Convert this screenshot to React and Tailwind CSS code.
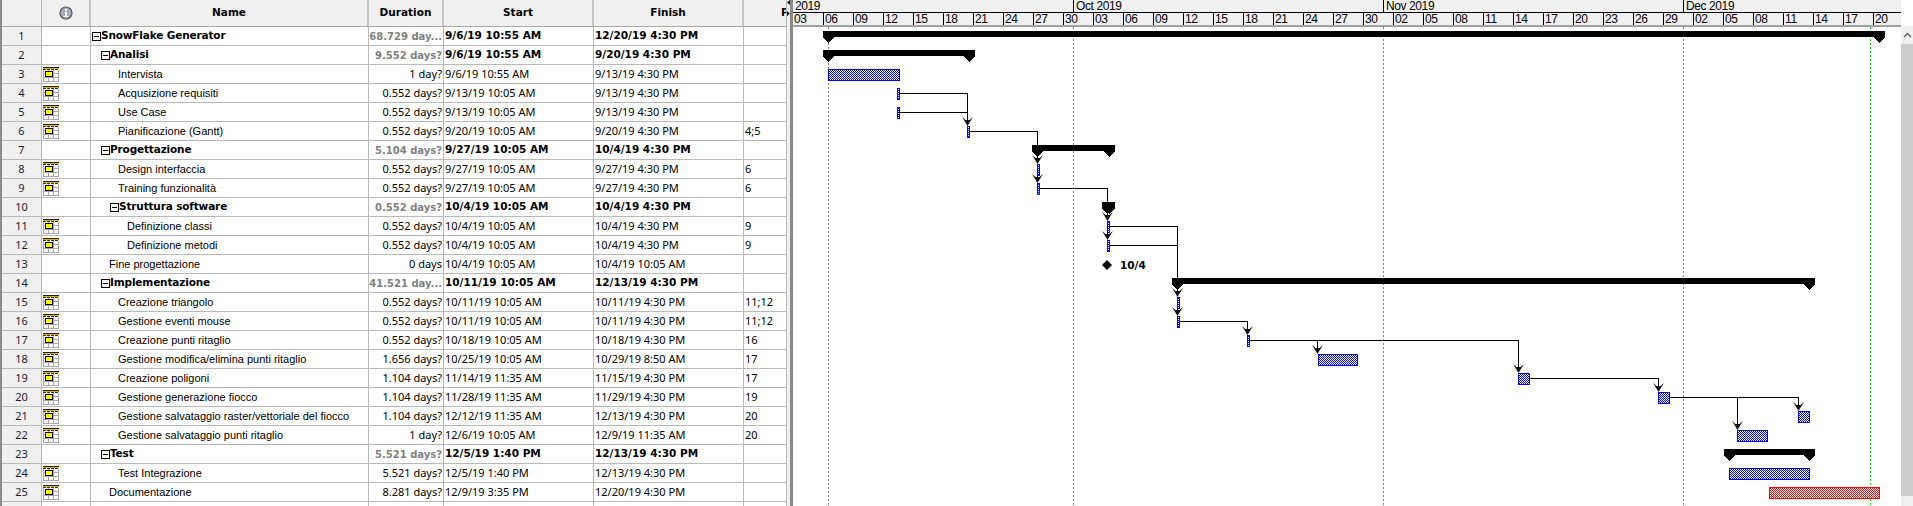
import React from "react";

const rows = [
    { name: "SnowFlake Generator", indent: 1, summary: true, dur: "68.729 day...", start: "9/6/19 10:55 AM", finish: "12/20/19 4:30 PM" },
    { name: "Analisi", indent: 10, summary: true, dur: "9.552 days?", start: "9/6/19 10:55 AM", finish: "9/20/19 4:30 PM" },
    { name: "Intervista", indent: 27, icon: true, dur: "1 day?", start: "9/6/19 10:55 AM", finish: "9/13/19 4:30 PM" },
    { name: "Acqusizione requisiti", indent: 27, icon: true, dur: "0.552 days?", start: "9/13/19 10:05 AM", finish: "9/13/19 4:30 PM" },
    { name: "Use Case", indent: 27, icon: true, dur: "0.552 days?", start: "9/13/19 10:05 AM", finish: "9/13/19 4:30 PM" },
    { name: "Pianificazione (Gantt)", indent: 27, icon: true, dur: "0.552 days?", start: "9/20/19 10:05 AM", finish: "9/20/19 4:30 PM", pred: "4;5" },
    { name: "Progettazione", indent: 10, summary: true, dur: "5.104 days?", start: "9/27/19 10:05 AM", finish: "10/4/19 4:30 PM" },
    { name: "Design interfaccia", indent: 27, icon: true, dur: "0.552 days?", start: "9/27/19 10:05 AM", finish: "9/27/19 4:30 PM", pred: "6" },
    { name: "Training funzionalità", indent: 27, icon: true, dur: "0.552 days?", start: "9/27/19 10:05 AM", finish: "9/27/19 4:30 PM", pred: "6" },
    { name: "Struttura software", indent: 19, summary: true, dur: "0.552 days?", start: "10/4/19 10:05 AM", finish: "10/4/19 4:30 PM" },
    { name: "Definizione classi", indent: 36, icon: true, dur: "0.552 days?", start: "10/4/19 10:05 AM", finish: "10/4/19 4:30 PM", pred: "9" },
    { name: "Definizione metodi", indent: 36, icon: true, dur: "0.552 days?", start: "10/4/19 10:05 AM", finish: "10/4/19 4:30 PM", pred: "9" },
    { name: "Fine progettazione", indent: 18, dur: "0 days", start: "10/4/19 10:05 AM", finish: "10/4/19 10:05 AM" },
    { name: "Implementazione", indent: 10, summary: true, dur: "41.521 day...", start: "10/11/19 10:05 AM", finish: "12/13/19 4:30 PM" },
    { name: "Creazione triangolo", indent: 27, icon: true, dur: "0.552 days?", start: "10/11/19 10:05 AM", finish: "10/11/19 4:30 PM", pred: "11;12" },
    { name: "Gestione eventi mouse", indent: 27, icon: true, dur: "0.552 days?", start: "10/11/19 10:05 AM", finish: "10/11/19 4:30 PM", pred: "11;12" },
    { name: "Creazione punti ritaglio", indent: 27, icon: true, dur: "0.552 days?", start: "10/18/19 10:05 AM", finish: "10/18/19 4:30 PM", pred: "16" },
    { name: "Gestione modifica/elimina punti ritaglio", indent: 27, icon: true, dur: "1.656 days?", start: "10/25/19 10:05 AM", finish: "10/29/19 8:50 AM", pred: "17" },
    { name: "Creazione poligoni", indent: 27, icon: true, dur: "1.104 days?", start: "11/14/19 11:35 AM", finish: "11/15/19 4:30 PM", pred: "17" },
    { name: "Gestione generazione fiocco", indent: 27, icon: true, dur: "1.104 days?", start: "11/28/19 11:35 AM", finish: "11/29/19 4:30 PM", pred: "19" },
    { name: "Gestione salvataggio raster/vettoriale del fiocco", indent: 27, icon: true, dur: "1.104 days?", start: "12/12/19 11:35 AM", finish: "12/13/19 4:30 PM", pred: "20" },
    { name: "Gestione salvataggio punti ritaglio", indent: 27, icon: true, dur: "1 day?", start: "12/6/19 10:05 AM", finish: "12/9/19 11:35 AM", pred: "20" },
    { name: "Test", indent: 10, summary: true, dur: "5.521 days?", start: "12/5/19 1:40 PM", finish: "12/13/19 4:30 PM" },
    { name: "Test Integrazione", indent: 27, icon: true, dur: "5.521 days?", start: "12/5/19 1:40 PM", finish: "12/13/19 4:30 PM" },
    { name: "Documentazione", indent: 18, icon: true, dur: "8.281 days?", start: "12/9/19 3:35 PM", finish: "12/20/19 4:30 PM" },
];

const months = [
    { label: "2019", width: "w-[280px]" },
    { label: "Oct 2019", width: "w-[310px] border-l border-black" },
    { label: "Nov 2019", width: "w-[300px] border-l border-black" },
    { label: "Dec 2019", width: "flex-1 border-l border-black" },
];

const days = [
    "03", "06", "09", "12", "15", "18", "21", "24", "27", "30",
    "03", "06", "09", "12", "15", "18", "21", "24", "27", "30",
    "02", "05", "08", "11", "14", "17", "20", "23", "26", "29",
    "02", "05", "08", "11", "14", "17", "20",
];

const gridCols = "grid grid-cols-[40px_49px_278px_75px_150px_150px_43px]";

// top of a table row, in page pixels
const rowTop = (n) => 27 + 19 * (n - 1);

const TaskIcon = () => (
    <svg width="16" height="15" viewBox="0 0 16 15" className="block" shapeRendering="crispEdges">
        <rect x="0" y="0" width="16" height="15" fill="#ffffff" />
        <path d="M0.5 3V14.5H15.5V3M5.5 3V15M10.5 3V15M0 6.5H16M0 10.5H16" stroke="#a6a6a6" fill="none" />
        <rect x="0" y="0" width="16" height="1" fill="#222222" />
        <rect x="0" y="1" width="16" height="1" fill="#e0b000" />
        <path d="M0 2.5H16" stroke="#333333" strokeDasharray="3 1" />
        <rect x="2.5" y="4.5" width="7" height="5" fill="#ffff00" stroke="#000000" />
    </svg>
);

const Toggle = () => (
    <svg width="9" height="9" viewBox="0 0 9 9" className="shrink-0" shapeRendering="crispEdges">
        <rect x="0.5" y="0.5" width="8" height="8" fill="#ffffff" stroke="#000000" />
        <path d="M2 4.5H7" stroke="#000000" />
    </svg>
);

const InfoIcon = () => (
    <svg width="14" height="14" viewBox="0 0 14 14">
        <circle cx="7" cy="7" r="6" fill="#a9a9bd" stroke="#555555" strokeWidth="1.2" />
        <rect x="6" y="3" width="2" height="2" fill="#ffffff" />
        <path d="M6 6H8V10H9.5V11H4.5V10H6Z" fill="#ffffff" />
    </svg>
);

const Header = () => (
    <div className={`${gridCols} h-[27px] border-b border-[#a9a9a9] bg-[#f0f0f0] font-['DejaVu_Sans'] text-[10.5px] font-bold text-black`}>
        <div className="border-r border-[#b9b9b9]" />
        <div className="flex items-center justify-center border-r-2 border-[#c4c4c4]">
            <InfoIcon />
        </div>
        <div className="flex items-center justify-center border-r-2 border-[#c4c4c4]">Name</div>
        <div className="flex items-center justify-center border-r-2 border-[#c4c4c4]">Duration</div>
        <div className="flex items-center justify-center border-r-2 border-[#c4c4c4]">Start</div>
        <div className="flex items-center justify-center border-r-2 border-[#c4c4c4]">Finish</div>
        <div className="flex items-center overflow-hidden whitespace-nowrap border-r border-[#b9b9b9] pl-[37px]">Predecessors</div>
    </div>
);

const Row = ({ n, row }) => {
    const boldText = "font-['DejaVu_Sans'] text-[10.5px] font-bold";
    const plainText = "font-['Noto_Sans'] text-[11px]";
    const nameClass = row.summary ? `${boldText} tracking-[-0.15px]` : "font-['Liberation_Sans'] text-[11px]";
    const durClass = row.summary ? "font-['DejaVu_Sans'] text-[10px] font-bold text-[#808080]" : plainText;
    const dateClass = row.summary ? boldText : plainText;
    const cell = "flex items-center overflow-hidden whitespace-nowrap border-r border-[#b9b9b9]";

    return (
        <div className={`${gridCols} h-[19px] border-b border-[#b9b9b9] text-black`}>
            <div className="flex items-center justify-center border-r border-[#b9b9b9] bg-[#f0f0f0] font-['Noto_Sans'] text-[11px] text-[#1c1c30]">{n}</div>
            <div className="border-r border-[#b9b9b9] pl-[1px] pt-[2px]">{row.icon && <TaskIcon />}</div>
            <div className={`${cell} ${nameClass}`} style={{ paddingLeft: row.indent }}>
                {row.summary && <Toggle />}
                <span>{row.name}</span>
            </div>
            <div className={`${cell} justify-end pr-[1px] ${durClass}`}>{row.dur}</div>
            <div className={`${cell} pl-[1px] ${dateClass}`}>{row.start}</div>
            <div className={`${cell} pl-[1px] ${dateClass}`}>{row.finish}</div>
            <div className={`${cell} pl-[1px] ${plainText}`}>{row.pred}</div>
        </div>
    );
};

const Timescale = () => (
    <div className="h-[27px] border-b-2 border-[#a0a0a0] bg-[#f0f0f0] font-['Liberation_Sans'] text-[12px] tracking-[-0.4px] text-black">
        <div className="flex h-[13px] border-b border-black leading-[12px]">
            {months.map((month) => (
                <div key={month.label} className={`${month.width} pl-[2px]`}>{month.label}</div>
            ))}
        </div>
        <div className="flex h-[12px] leading-[11px]">
            {days.map((day, i) => (
                <div key={i} className={`${i === days.length - 1 ? "flex-1" : "w-[30px]"} ${i === 0 ? "" : "border-l border-black"} pl-[1px] pt-[1px]`}>{day}</div>
            ))}
        </div>
    </div>
);

const Bar = ({ x1, x2, n, color = "blue" }) => (
    <rect
        x={x1 + 0.5}
        y={rowTop(n) + 4.5}
        width={x2 - x1 - 1}
        height={11}
        fill={`url(#${color}Hatch)`}
        stroke={color === "red" ? "#ff0000" : "#0000ff"}
        shapeRendering="crispEdges"
    />
);

const Summary = ({ x1, x2, n }) => {
    const t = rowTop(n);
    const points = [
        [x1, t + 4], [x2, t + 4], [x2, t + 11], [x2 - 5.5, t + 16], [x2 - 11, t + 11], [x2 - 11, t + 10],
        [x1 + 11, t + 10], [x1 + 11, t + 11], [x1 + 5.5, t + 16], [x1, t + 11],
    ];
    return <polygon points={points.map((p) => p.join(",")).join(" ")} fill="#000000" shapeRendering="crispEdges" />;
};

const Arrow = ({ x, y }) => (
    <polygon
        points={`${x},${y} ${x - 3},${y - 5} ${x - 5.5},${y - 9} ${x - 2},${y - 6} ${x + 2},${y - 6} ${x + 5.5},${y - 9} ${x + 3},${y - 5}`}
        fill="#111111"
    />
);

const links = [
    "M900 93.5H967.5V120",
    "M900 112.5H967.5",
    "M970 131.5H1037.5V158",
    "M1037.5 164V177",
    "M1040 188.5H1107.5V215",
    "M1107.5 221V234",
    "M1110 226.5H1177.5V291",
    "M1110 245.5H1177.5",
    "M1177.5 297V310",
    "M1180 321.5H1247.5V330",
    "M1250 340.5H1518.5V367",
    "M1317.5 340.5V348",
    "M1530 378.5H1658.5V386",
    "M1670 397.5H1798.5V405",
    "M1737.5 397.5V424",
];

const arrows = [
    [967.5, 126], [1037.5, 164], [1037.5, 183], [1107.5, 221], [1107.5, 240], [1177.5, 297],
    [1177.5, 316], [1247.5, 335], [1317.5, 354], [1518.5, 373], [1658.5, 392], [1798.5, 411], [1737.5, 430],
];

const Chart = () => (
    <svg width="1108" height="479" viewBox="793 27 1108 479" className="block">
        <defs>
            <pattern id="blueHatch" width="2" height="2" patternUnits="userSpaceOnUse">
                <rect width="2" height="2" fill="#ffffff" />
                <rect width="1" height="1" fill="#0000ff" />
                <rect x="1" y="1" width="1" height="1" fill="#0000ff" />
            </pattern>
            <pattern id="redHatch" width="2" height="2" patternUnits="userSpaceOnUse">
                <rect width="2" height="2" fill="#ffffff" />
                <rect width="1" height="1" fill="#ff0000" />
                <rect x="1" y="1" width="1" height="1" fill="#ff0000" />
            </pattern>
        </defs>

        {[828, 1073, 1383, 1683].map((x) => (
            <path key={x} d={`M${x + 0.5} 27V506`} stroke="#808080" strokeDasharray="2 2" shapeRendering="crispEdges" />
        ))}
        <path d="M1870.5 27V506" stroke="#22dd22" strokeDasharray="2 2" shapeRendering="crispEdges" />

        <Summary x1={823} x2={1885} n={1} />
        <Summary x1={823} x2={975} n={2} />
        <Summary x1={1032} x2={1115} n={7} />
        <Summary x1={1102} x2={1115} n={10} />
        <Summary x1={1172} x2={1815} n={14} />
        <Summary x1={1724} x2={1815} n={23} />

        {links.map((d) => (
            <path key={d} d={d} stroke="#000000" fill="none" shapeRendering="crispEdges" />
        ))}
        {arrows.map(([x, y]) => (
            <Arrow key={`${x}-${y}`} x={x} y={y} />
        ))}

        <Bar x1={828} x2={900} n={3} />
        <Bar x1={897} x2={900} n={4} />
        <Bar x1={897} x2={900} n={5} />
        <Bar x1={967} x2={970} n={6} />
        <Bar x1={1037} x2={1040} n={8} />
        <Bar x1={1037} x2={1040} n={9} />
        <Bar x1={1107} x2={1110} n={11} />
        <Bar x1={1107} x2={1110} n={12} />
        <Bar x1={1177} x2={1180} n={15} />
        <Bar x1={1177} x2={1180} n={16} />
        <Bar x1={1247} x2={1250} n={17} />
        <Bar x1={1318} x2={1358} n={18} />
        <Bar x1={1518} x2={1530} n={19} />
        <Bar x1={1658} x2={1670} n={20} />
        <Bar x1={1798} x2={1810} n={21} />
        <Bar x1={1737} x2={1768} n={22} />
        <Bar x1={1729} x2={1810} n={24} />
        <Bar x1={1769} x2={1880} n={25} color="red" />

        <polygon points="1107,260 1112,265 1107,270 1102,265" fill="#000000" />
        <text x="1120" y="269" fontFamily="DejaVu Sans" fontSize="10.5" fontWeight="700" fill="#000000">10/4</text>
    </svg>
);

const Scrollbar = () => (
    <div className="flex w-[12px] flex-col">
        <div className="h-[26px] bg-white" />
        <div className="flex h-[18px] items-center justify-center bg-[#f0f0f0]">
            <svg width="9" height="6" viewBox="0 0 9 6">
                <path d="M1 5L4.5 1.5L8 5" stroke="#606060" strokeWidth="1.5" fill="none" />
            </svg>
        </div>
        <div className="h-[452px] bg-[#cdcdcd]" />
        <div className="flex-1 bg-[#f0f0f0]" />
    </div>
);

export default function App() {
    return (
        <div className="flex h-[506px] w-[1913px] overflow-hidden bg-white">
            <div className="h-full w-[2px] bg-[#8a8a8a]" />
            <div className="h-full w-[785px] overflow-hidden">
                <Header />
                {rows.map((row, i) => (
                    <Row key={i} n={i + 1} row={row} />
                ))}
                <div className={`${gridCols} h-[19px]`}>
                    <div className="border-r border-[#b9b9b9] bg-[#f0f0f0]" />
                    <div className="border-r border-[#b9b9b9]" />
                    <div className="border-r border-[#b9b9b9]" />
                    <div className="border-r border-[#b9b9b9]" />
                    <div className="border-r border-[#b9b9b9]" />
                    <div className="border-r border-[#b9b9b9]" />
                    <div className="border-r border-[#b9b9b9]" />
                </div>
            </div>
            <div className="flex h-full w-[6px] border-r-[3px] border-[#8a8a8a] bg-[#f0f0f0]">
                <svg width="3" height="20" viewBox="0 0 3 20" className="block">
                    <path d="M3 0V5L0 2.5Z" fill="#000000" />
                    <path d="M0 11V16L3 13.5Z" fill="#000000" />
                </svg>
            </div>
            <div className="w-[1108px]">
                <Timescale />
                <Chart />
            </div>
            <Scrollbar />
        </div>
    );
}
